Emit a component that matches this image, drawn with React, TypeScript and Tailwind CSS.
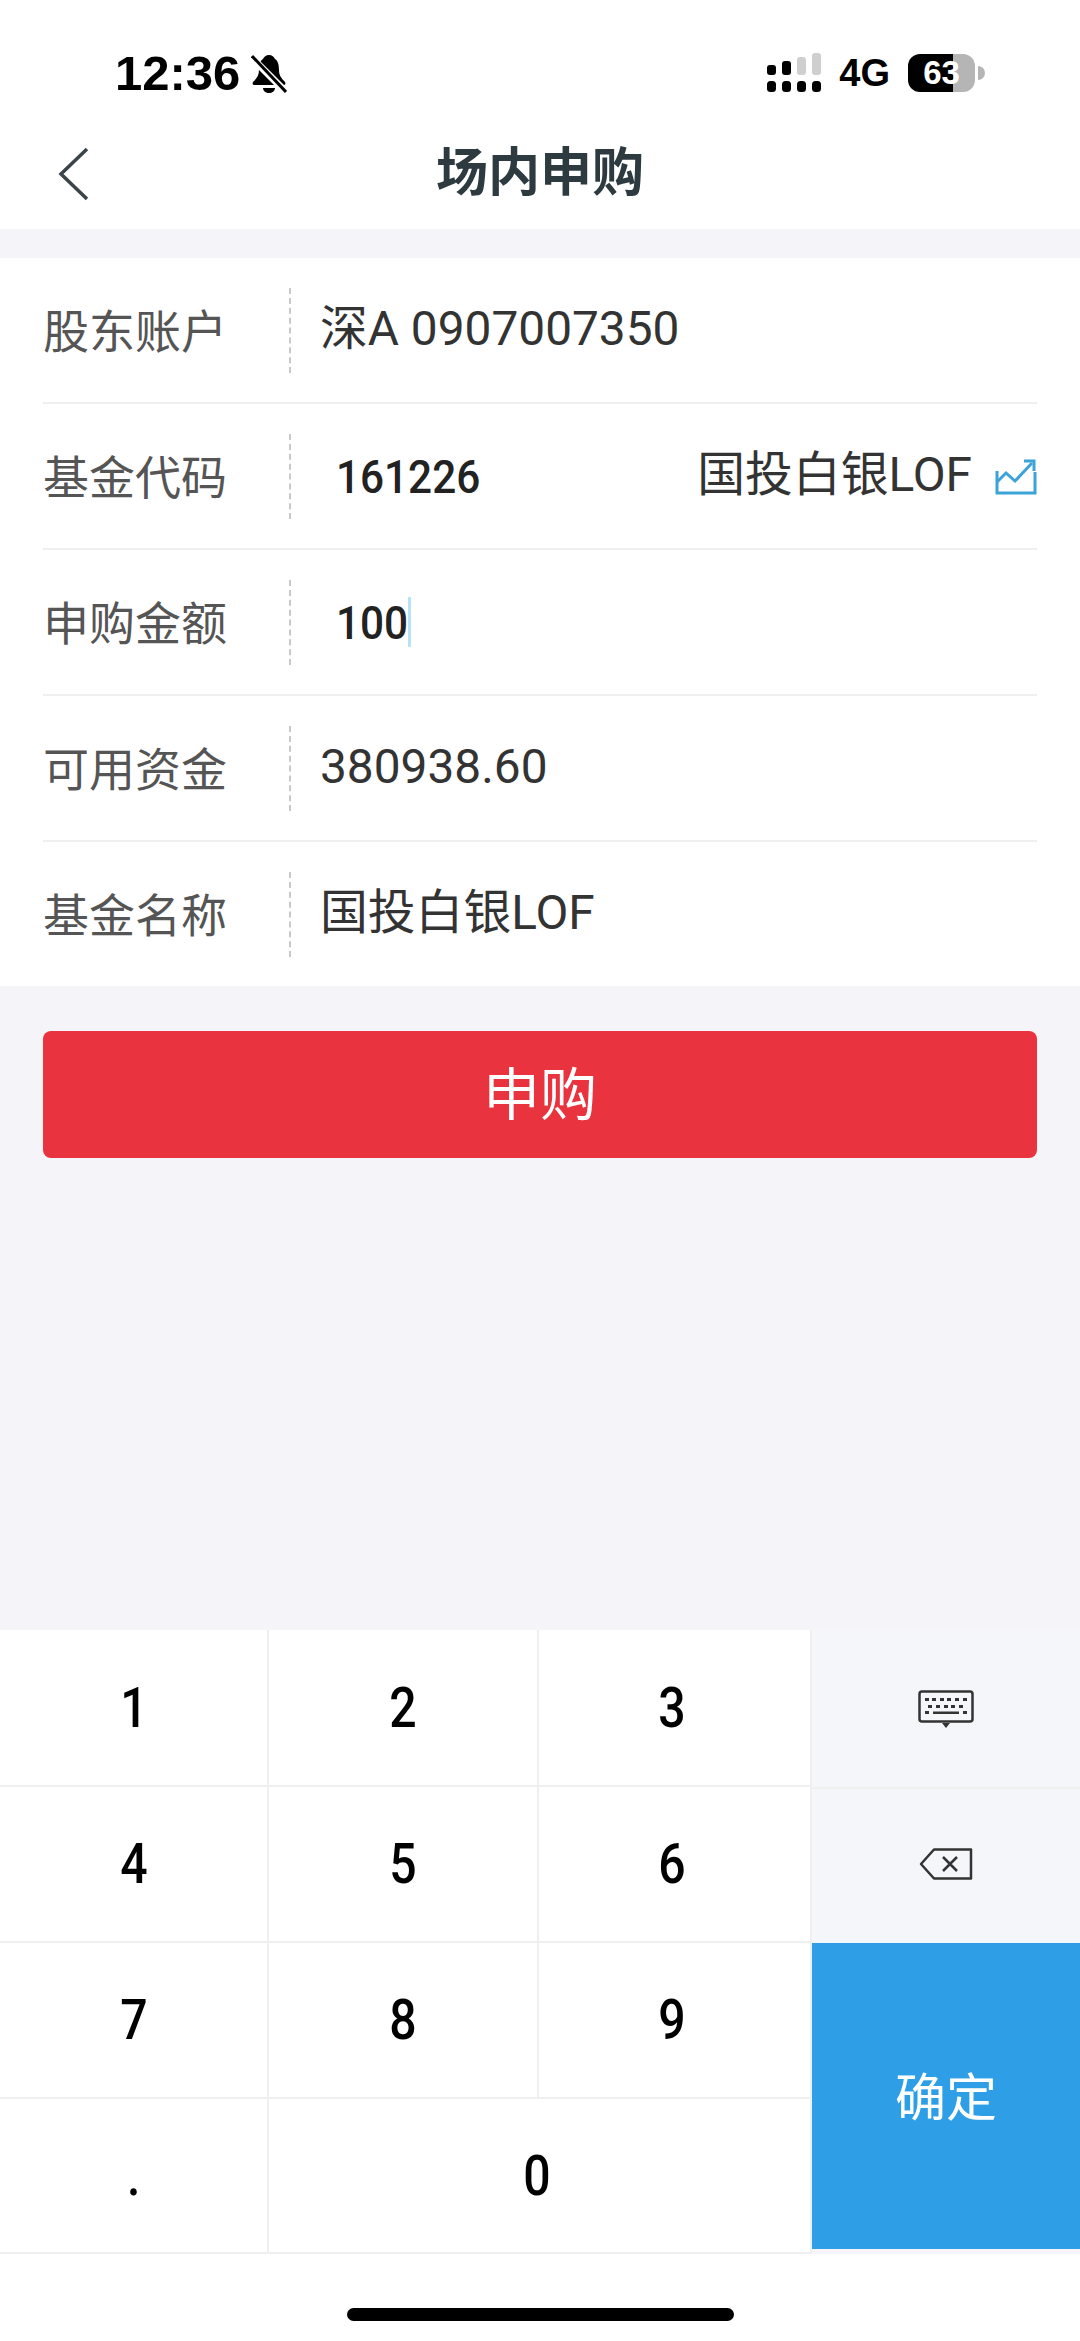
import React from 'react';

const sans = 'font-["Liberation_Sans","Noto_Sans_CJK_SC",sans-serif]';
const cjk = 'font-["Roboto","Noto_Sans_CJK_SC",sans-serif]';

const BellSlash: React.FC = () => (
  <svg width="36" height="40" viewBox="0 0 36 40">
    <path d="M18 1c-3 0-5 2-6 4-3 2-4 6-4 11 0 5-2 8-6 12-1 2 0 3 2 3h28c2 0 3-1 2-3-4-4-6-7-6-12 0-5-1-9-4-11-1-2-3-4-6-4z" fill="#000" />
    <path d="M12 34h12c0 3-3 5-6 5s-6-2-6-5z" fill="#000" />
    <path d="M0 3l36 36" stroke="#fff" strokeWidth="7" />
    <path d="M1 2l34 36" stroke="#000" strokeWidth="3" />
  </svg>
);

const Signal: React.FC = () => (
  <svg width="56" height="40" viewBox="0 0 56 40">
    <rect x="1" y="12" width="9" height="10" rx="3" fill="#000" />
    <rect x="16" y="8" width="9" height="14" rx="3" fill="#000" />
    <rect x="31" y="4" width="9" height="18" rx="3" fill="#cfcfcf" />
    <rect x="46" y="0" width="9" height="22" rx="3" fill="#cfcfcf" />
    <rect x="1" y="28" width="9" height="11" rx="3.5" fill="#000" />
    <rect x="16" y="28" width="9" height="11" rx="3.5" fill="#000" />
    <rect x="31" y="28" width="9" height="11" rx="3.5" fill="#000" />
    <rect x="46" y="28" width="9" height="11" rx="3.5" fill="#000" />
  </svg>
);

const ChartIcon: React.FC = () => (
  <svg width="42" height="37" viewBox="0 0 42 37" fill="none" stroke="#3ba3d8" strokeWidth="3">
    <path d="M2 13v22h38V14" />
    <path d="M2 24l9-9 9 8L37 5" />
    <path d="M29 3h10v10" />
  </svg>
);

const KeyboardIcon: React.FC = () => (
  <svg width="56" height="38" viewBox="0 0 56 38">
    <rect x="1.5" y="1.5" width="53" height="30" rx="2.5" fill="none" stroke="#333" strokeWidth="2.5" />
    <g fill="#333">
      <rect x="7" y="8" width="4" height="3" />
      <rect x="14" y="8" width="4" height="3" />
      <rect x="22" y="8" width="4" height="3" />
      <rect x="29" y="8" width="4" height="3" />
      <rect x="37" y="8" width="4" height="3" />
      <rect x="45" y="8" width="4" height="3" />
      <rect x="10" y="15" width="4" height="3" />
      <rect x="18" y="15" width="4" height="3" />
      <rect x="26" y="15" width="4" height="3" />
      <rect x="33" y="15" width="4" height="3" />
      <rect x="41" y="15" width="4" height="3" />
      <rect x="7" y="21" width="4" height="3" />
      <rect x="15" y="21.5" width="26" height="2.5" />
      <rect x="45" y="21" width="4" height="3" />
      <path d="M24 33h8l-4 5z" />
    </g>
  </svg>
);

const BackspaceIcon: React.FC = () => (
  <svg width="54" height="32" viewBox="0 0 54 32" fill="none" stroke="#333" strokeWidth="2.5">
    <path d="M15 1.5h37v29H15L2 16z" strokeLinejoin="round" />
    <path d="M24 9l14 14M38 9L24 23" />
  </svg>
);

const Row: React.FC<{ label: string; last?: boolean; children: React.ReactNode }> = ({ label, last, children }) => (
  <div className={`flex items-center ${last ? 'h-[144px]' : 'h-[146px] border-b-2 border-[#efefef]'}`}>
    <div className={`w-[246px] pt-[3px] text-[46px] leading-none text-[#555] ${cjk}`}>{label}</div>
    <div className="h-[85px] border-l-2 border-dashed border-[#c8c8c8]" />
    {children}
  </div>
);

const Key: React.FC<{ label: string; className?: string }> = ({ label, className = '' }) => (
  <div className={`flex items-center justify-center border-b-2 border-r-2 border-[#efefef] bg-white ${className}`}>
    <span className={`scale-x-[0.86] text-[56px] font-medium leading-none text-black ${cjk}`}>{label}</span>
  </div>
);

export default function App() {
  return (
    <div className="flex h-[2341px] w-[1080px] flex-col overflow-hidden bg-[#f4f4f9]">
      <div className="bg-white">
        <div className={`flex h-[110px] items-start justify-between pl-[115px] pr-[95px] pt-[53px] ${sans}`}>
          <div className="flex items-center gap-[11px]">
            <span className="text-[49px] font-bold leading-[41px] text-black">12:36</span>
            <BellSlash />
          </div>
          <div className="flex items-center">
            <Signal />
            <span className="ml-[17px] text-[38px] font-bold leading-[40px] text-black">4G</span>
            <div className="ml-[18px] flex h-[38px] w-[67px] items-center justify-center rounded-[12px] bg-[linear-gradient(90deg,#000_67%,#b5b5b5_67%)] text-[33px] font-bold text-white">
              63
            </div>
            <div className="ml-[3px] h-[14px] w-[7px] rounded-r-full bg-[#b5b5b5]" />
          </div>
        </div>
        <div className="flex h-[119px] items-center pl-[58px] pt-[8px]">
          <svg width="32" height="54" viewBox="0 0 32 54" fill="none" stroke="#3b4449" strokeWidth="3.5">
            <path d="M29 2L3 27l26 25" />
          </svg>
          <div className={`ml-[346px] text-[52px] font-bold leading-none text-[#2d3a40] ${cjk}`}>场内申购</div>
        </div>
      </div>

      <div className="mt-[29px] bg-white px-[43px]">
        <Row label="股东账户">
          <span className={`ml-[29px] text-[47.8px] leading-none text-[#333] ${cjk}`}>深A 0907007350</span>
        </Row>
        <Row label="基金代码">
          <span className={`-mr-[13px] ml-[45px] origin-left scale-x-[0.9] text-[47px] font-medium leading-none text-[#222] ${cjk}`}>161226</span>
          <span className={`ml-auto text-[47.8px] leading-none text-[#333] ${cjk}`}>国投白银LOF</span>
          <div className="ml-[23px]">
            <ChartIcon />
          </div>
        </Row>
        <Row label="申购金额">
          <span className={`-mr-[8px] ml-[45px] origin-left scale-x-[0.9] text-[47px] font-medium leading-none text-[#222] ${cjk}`}>100</span>
          <div className="h-[50px] w-[3px] bg-[#b8e2f5]" />
        </Row>
        <Row label="可用资金">
          <span className={`ml-[29px] text-[47.8px] leading-none text-[#333] ${cjk}`}>380938.60</span>
        </Row>
        <Row label="基金名称" last>
          <span className={`ml-[29px] text-[47.8px] leading-none text-[#333] ${cjk}`}>国投白银LOF</span>
        </Row>
      </div>

      <div className="mx-[43px] mt-[45px] flex h-[127px] items-center justify-center rounded-[8px] bg-[#e9343f]">
        <span className={`pt-[2px] text-[57px] leading-none text-white ${cjk}`}>申购</span>
      </div>

      <div className="flex-1" />

      <div className="grid grid-cols-[269px_270px_273px_268px] grid-rows-[157px_156px_156px_155px]">
        <Key label="1" />
        <Key label="2" />
        <Key label="3" className="border-r-0 pr-[5px]" />
        <div className="flex items-center justify-center bg-[#f4f6fa]">
          <KeyboardIcon />
        </div>
        <Key label="4" />
        <Key label="5" />
        <Key label="6" className="border-r-0 pr-[5px]" />
        <div className="flex items-center justify-center border-t-2 border-[#efefef] bg-[#f4f6fa] pb-[4px]">
          <BackspaceIcon />
        </div>
        <Key label="7" />
        <Key label="8" />
        <Key label="9" className="border-r-0 pr-[5px]" />
        <div className="row-span-2 mb-[5px] flex items-center justify-center bg-[#2e9fe6] pt-[4px]">
          <span className={`text-[51px] leading-none text-white ${cjk}`}>确定</span>
        </div>
        <Key label="." />
        <Key label="0" className="col-span-2 border-r-0 pr-[5px]" />
      </div>

      <div className="flex h-[87px] justify-center bg-white pt-[54px]">
        <div className="h-[13px] w-[387px] rounded-full bg-black" />
      </div>
    </div>
  );
}
